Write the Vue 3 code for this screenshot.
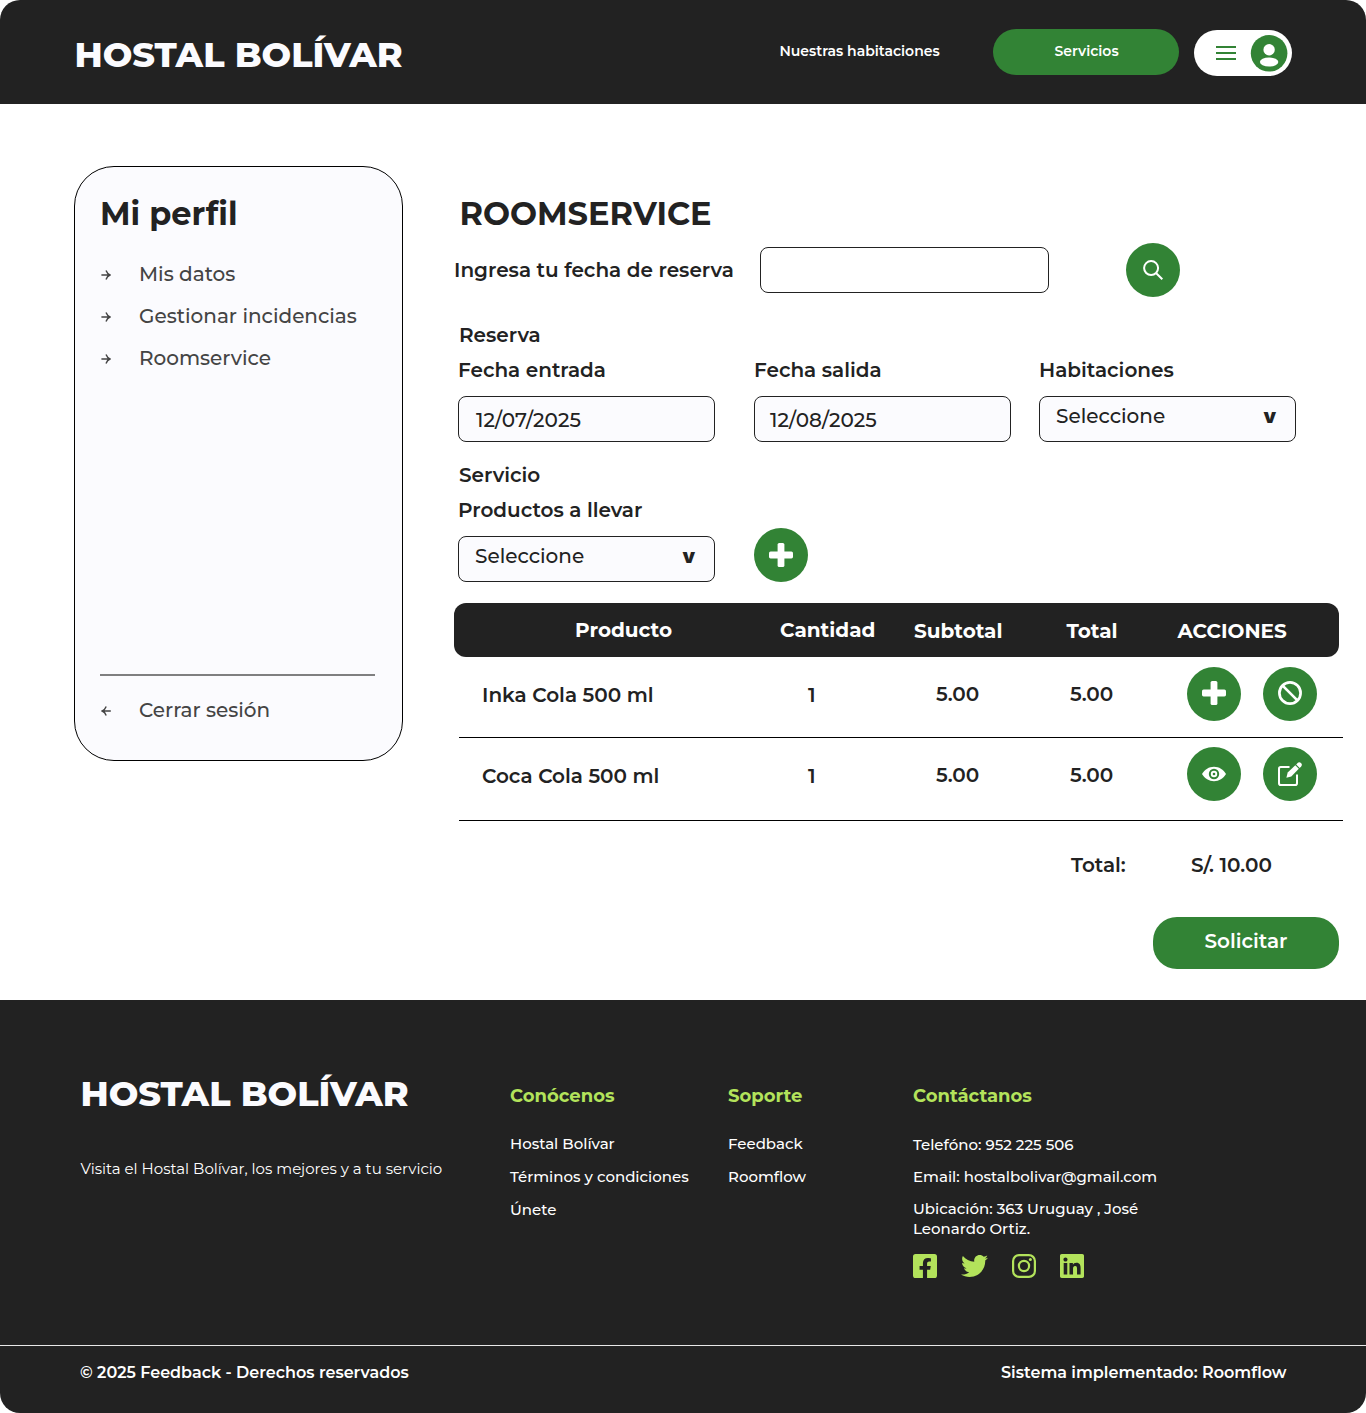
<script setup>
const menu = ['Mis datos', 'Gestionar incidencias', 'Roomservice']

const products = [
  { name: 'Inka Cola 500 ml', row: 'first', qty: 1, subtotal: '5.00', total: '5.00', actions: ['plus', 'ban'] },
  { name: 'Coca Cola 500 ml', row: 'last', qty: 1, subtotal: '5.00', total: '5.00', actions: ['eye', 'edit'] },
]
</script>

<template>
  <div class="page">
    <header class="topbar">
      <div class="logo">HOSTAL BOLÍVAR</div>
      <a class="nav-link">Nuestras habitaciones</a>
      <a class="nav-pill">Servicios</a>
      <div class="account">
        <svg class="burger" viewBox="0 0 20 14"><path d="M0 1h20M0 7h20M0 13h20" stroke="#328335" stroke-width="1.9" /></svg>
        <svg class="avatar" viewBox="-.6 0 38 37">
          <circle cx="18.5" cy="18.3" r="18.3" fill="#328335" />
          <circle cx="18.5" cy="14.8" r="5.7" fill="#fff" />
          <ellipse cx="18.5" cy="27" rx="9.2" ry="4.5" fill="#fff" />
        </svg>
      </div>
    </header>

    <main class="body">
      <aside class="profile">
        <h2>Mi perfil</h2>
        <nav>
          <a v-for="item in menu" :key="item" class="menu-item">
            <svg viewBox="0 0 10 10"><path d="M.4 5H8.6M5 .6Q6.2 3.8 9 5 6.2 6.2 5 9.4" /></svg>
            <span>{{ item }}</span>
          </a>
        </nav>
        <div class="logout">
          <a class="menu-item">
            <svg viewBox="0 0 10 10"><path d="M9.8 5H1.6M5.2 .6Q4 3.8 1.2 5 4 6.2 5.2 9.4" /></svg>
            <span>Cerrar sesión</span>
          </a>
        </div>
      </aside>

      <section class="content">
        <h1>ROOMSERVICE</h1>
        <div class="search">
          <label>Ingresa tu fecha de reserva</label>
          <input type="text" />
          <button class="round">
            <svg class="search-icon" viewBox="0 0 20 20"><circle cx="8.1" cy="8.1" r="7" /><path d="M13 13l6.3 6.3" /></svg>
          </button>
        </div>

        <div class="section-title reserva">Reserva</div>
        <div class="fields">
          <div class="field">
            <label>Fecha entrada</label>
            <div class="box check-in">12/07/2025</div>
          </div>
          <div class="field second">
            <label>Fecha salida</label>
            <div class="box check-out">12/08/2025</div>
          </div>
          <div class="field third">
            <label>Habitaciones</label>
            <div class="box select"><span>Seleccione</span><b>v</b></div>
          </div>
        </div>

        <div class="section-title servicio">Servicio</div>
        <div class="fields service-fields">
          <div class="field">
            <label>Productos a llevar</label>
            <div class="box select"><span>Seleccione</span><b>v</b></div>
          </div>
          <button class="round add">
            <svg class="icon" viewBox="0 0 24 24"><rect x="8.6" width="6.8" height="24" rx="1.6" /><rect y="8.6" width="24" height="6.8" rx="1.6" /></svg>
          </button>
        </div>

        <div class="thead">
          <span class="th-producto">Producto</span>
          <span class="th-cantidad">Cantidad</span>
          <span>Subtotal</span>
          <span>Total</span>
          <span>ACCIONES</span>
        </div>
        <div v-for="p in products" :key="p.name" class="row" :class="p.row">
          <span class="lower">{{ p.name }}</span>
          <span class="lower">{{ p.qty }}</span>
          <span class="price">{{ p.subtotal }}</span>
          <span class="price">{{ p.total }}</span>
          <div class="actions">
            <button v-for="a in p.actions" :key="a" class="round">
              <svg v-if="a === 'plus'" class="icon" viewBox="0 0 24 24"><rect x="8.6" width="6.8" height="24" rx="1.6" /><rect y="8.6" width="24" height="6.8" rx="1.6" /></svg>
              <svg v-else-if="a === 'ban'" class="icon" viewBox="0 0 24 24"><circle cx="12" cy="12" r="10.6" fill="none" stroke="#fff" stroke-width="2.7" /><path d="M4.6 4.6l14.8 14.8" stroke="#fff" stroke-width="2.7" /></svg>
              <svg v-else-if="a === 'eye'" class="icon" viewBox="0 0 24 24">
                <path d="M0 12C2.6 7.6 7 4.8 12 4.8S21.4 7.6 24 12c-2.6 4.4-7 7.2-12 7.2S2.6 16.4 0 12z" />
                <circle cx="12" cy="12" r="5.2" fill="#328335" />
                <circle cx="12" cy="12" r="3.2" fill="#fff" />
                <circle cx="12" cy="12" r="1.3" fill="#328335" />
              </svg>
              <svg v-else class="icon" viewBox="0 0 24 24">
                <path d="M11.5 5H2.8Q1 5 1 6.8v14.4Q1 23 2.8 23h14.4q1.8 0 1.8-1.8V12.5" fill="none" stroke="#fff" stroke-width="2" />
                <path d="M8.4 15.7l1.3-5.1 7.6-7.3 3.5 3.5-7.5 7.6z" />
                <path d="M18.2 2.4l1.4-1.5q1.6-1.5 3.4.1 1.7 1.8.2 3.4l-1.5 1.5z" />
              </svg>
            </button>
          </div>
        </div>

        <div class="sum">
          <span class="sum-label">Total:</span>
          <span>S/. 10.00</span>
        </div>
        <button class="submit">Solicitar</button>
      </section>
    </main>

    <footer class="footer">
      <div class="columns">
        <div class="brand">
          <div class="logo">HOSTAL BOLÍVAR</div>
          <p>Visita el Hostal Bolívar, los mejores y a tu servicio</p>
        </div>
        <div class="links">
          <h3>Conócenos</h3>
          <a>Hostal Bolívar</a>
          <a>Términos y condiciones</a>
          <a>Únete</a>
        </div>
        <div class="links">
          <h3>Soporte</h3>
          <a>Feedback</a>
          <a>Roomflow</a>
        </div>
        <div class="contact">
          <h3>Contáctanos</h3>
          <p>Telefóno: 952 225 506</p>
          <p>Email: hostalbolivar@gmail.com</p>
          <p>Ubicación: 363 Uruguay , José<br />Leonardo Ortiz.</p>
          <div class="social">
            <svg width="24" height="24" viewBox="0 32 448 448"><path d="M400 32H48A48 48 0 0 0 0 80v352a48 48 0 0 0 48 48h137.25V327.69h-63V256h63v-54.64c0-62.15 37-96.48 93.67-96.48 27.14 0 55.52 4.84 55.52 4.84v61h-31.27c-30.81 0-40.42 19.12-40.42 38.73V256h68.78l-11 71.69h-57.78V480H400a48 48 0 0 0 48-48V80a48 48 0 0 0-48-48z" /></svg>
            <svg width="27" height="22" viewBox="0 48 512 416"><path d="M459.37 151.716c.325 4.548.325 9.097.325 13.645 0 138.72-105.583 298.558-298.558 298.558-59.452 0-114.68-17.219-161.137-47.106 8.447.974 16.568 1.299 25.34 1.299 49.055 0 94.213-16.568 130.274-44.832-46.132-.975-84.792-31.188-98.112-72.772 6.498.974 12.995 1.624 19.818 1.624 9.421 0 18.843-1.3 27.614-3.573-48.081-9.747-84.143-51.98-84.143-102.985v-1.299c13.969 7.797 30.214 12.67 47.431 13.319-28.264-18.843-46.781-51.005-46.781-87.391 0-19.492 5.197-37.36 14.294-52.954 51.655 63.675 129.3 105.258 216.365 109.807-1.624-7.797-2.599-15.918-2.599-24.04 0-57.828 46.782-104.934 104.934-104.934 30.213 0 57.502 12.67 76.67 33.137 23.715-4.548 46.456-13.32 66.599-25.34-7.798 24.366-24.366 44.833-46.132 57.827 21.117-2.273 41.584-8.122 60.426-16.243-14.292 20.791-32.161 39.308-52.628 54.253z" /></svg>
            <svg width="24" height="24" viewBox="0 0 24 24"><rect x="1.1" y="1.1" width="21.8" height="21.8" rx="6" fill="none" stroke="#b3e35b" stroke-width="2.2" /><circle cx="12" cy="12" r="5.1" fill="none" stroke="#b3e35b" stroke-width="2.2" /><circle cx="18.4" cy="5.6" r="1.5" /></svg>
            <svg width="24" height="24" viewBox="0 32 448 448"><path d="M416 32H31.9C14.3 32 0 46.5 0 64.3v383.4C0 465.5 14.3 480 31.9 480H416c17.6 0 32-14.5 32-32.3V64.3c0-17.8-14.4-32.3-32-32.3zM135.4 416H69V202.2h66.5V416zm-33.2-243c-21.3 0-38.5-17.3-38.5-38.5S80.9 96 102.2 96c21.2 0 38.5 17.3 38.5 38.5 0 21.3-17.2 38.5-38.5 38.5zm282.1 243h-66.4V312c0-24.8-.5-56.7-34.5-56.7-34.6 0-39.9 27-39.9 54.9V416h-66.4V202.2h63.7v29.2h.9c8.9-16.8 30.6-34.5 62.9-34.5 67.2 0 79.7 44.3 79.7 101.9V416z" /></svg>
          </div>
        </div>
      </div>
      <div class="legal">
        <span class="copy">© 2025 Feedback - Derechos reservados</span>
        <span>Sistema implementado: Roomflow</span>
      </div>
    </footer>
  </div>
</template>

<style>
body {
  margin: 0;
  background: #fff;
}
</style>

<style scoped>
.page {
  width: 1366px;
  height: 1413px;
  display: flex;
  flex-direction: column;
  overflow: hidden;
  color: #222;
  font-family: Montserrat, Inter, sans-serif;
  font-size: 20px;
  line-height: 24px;
  white-space: nowrap;
}
.page * { box-sizing: border-box; }
h1, h2, h3, p { margin: 0; }
button { border: 0; padding: 0; font: inherit; }

/* header */
.topbar {
  height: 104px;
  display: flex;
  align-items: flex-start;
  background: #222;
  border-radius: 20px 20px 0 0;
  padding-left: 74.5px;
  color: #fff;
}
.logo {
  font-size: 35px;
  line-height: 40px;
  font-weight: 800;
  color: #fbfbfe;
}
.topbar .logo { width: 705px; margin-top: 35px; }
.nav-link, .nav-pill { font-size: 14px; font-weight: 600; }
.nav-link { width: 213.5px; margin-top: 39px; }
.nav-pill {
  width: 186px;
  height: 46px;
  margin-top: 29px;
  line-height: 44px;
  padding-left: 61.5px;
  border-radius: 23px;
  background: #328335;
}
.account {
  width: 98px;
  height: 46px;
  margin: 30px 0 0 15px;
  padding-left: 22px;
  display: flex;
  align-items: center;
  border-radius: 23px;
  background: #fff;
}
.burger { width: 20px; height: 14px; }
.avatar { width: 38px; height: 37px; margin-left: 14px; }

/* body */
.body {
  height: 896px;
  display: flex;
  align-items: flex-start;
  padding-left: 74px;
}
.profile {
  width: 329px;
  height: 595px;
  margin-top: 62px;
  padding: 27px 27px 0 25px;
  display: flex;
  flex-direction: column;
  border: 1px solid #000;
  border-radius: 40px;
  background: #fbfbfe;
}
.profile h2 {
  font-size: 32px;
  line-height: 40px;
}
.profile nav { margin-top: 19px; }
.menu-item {
  display: flex;
  align-items: center;
  height: 42px;
  padding-left: 1px;
  font-weight: 500;
  color: #444;
}
.menu-item svg {
  width: 10px;
  height: 10px;
  margin: 2px 28px 0 0;
  fill: none;
  stroke: #444;
  stroke-width: 1.4;
}
.logout {
  margin-top: 295px;
  padding-top: 13px;
  border-top: 2px solid #7f7f80;
}

.content {
  width: 889px;
  margin: 90px 0 0 51px;
  display: flex;
  flex-direction: column;
}
h1 {
  font-size: 32px;
  line-height: 40px;
  margin-left: 5.5px;
}
label, .section-title { font-weight: 600; }
.search {
  display: flex;
  align-items: center;
  height: 54px;
  margin-top: 9px;
}
.search label { width: 306px; }
.search input {
  width: 289px;
  height: 46px;
  margin: 0 77px 0 0;
  border: 1px solid #222;
  border-radius: 8px;
  background: #fff;
}
.round {
  width: 54px;
  height: 54px;
  display: flex;
  align-items: center;
  justify-content: center;
  border-radius: 50%;
  background: #328335;
}
.icon { width: 24px; height: 24px; fill: #fff; }
.search-icon {
  width: 20px;
  height: 20px;
  fill: none;
  stroke: #fff;
  stroke-width: 2;
}
.section-title { margin-left: 5px; }
.reserva { margin-top: 26px; line-height: 25px; }
.servicio { margin-top: 21px; }
.fields { display: flex; margin: 10px 0 0 4px; }
.service-fields { align-items: flex-end; margin-top: 11px; }
.field { width: 257px; }
.field label { display: block; }
.second { margin-left: 39px; }
.third { margin-left: 28px; }
.add { margin-left: 39px; }
.box {
  height: 46px;
  margin-top: 14px;
  line-height: 46px;
  font-weight: 500;
  border: 1px solid #222;
  border-radius: 8px;
  background: #fbfbfe;
}
.check-in { padding-left: 17px; }
.check-out { padding-left: 15px; }
.select {
  display: flex;
  line-height: 38px;
  padding-left: 16px;
}
.select span { width: 207.5px; }
.select b { font-family: Inter, sans-serif; font-weight: 900; }

/* products table */
.thead {
  width: 885px;
  height: 54px;
  margin-top: 21px;
  display: grid;
  grid-template-columns: 326px 134px 152.5px 111px 1fr;
  line-height: 56px;
  font-weight: 700;
  color: #fff;
  background: #222;
  border-radius: 12px;
}
.th-producto { padding-left: 121px; line-height: 54px; }
.th-cantidad { line-height: 54px; }
.row {
  display: grid;
  grid-template-columns: 326px 128px 134px 117px 1fr;
  margin-left: 5px;
  padding-left: 23px;
  line-height: 54px;
  font-weight: 600;
  border-bottom: 1px solid #000;
}
.first { height: 81px; padding-top: 10px; }
.last { height: 83px; padding-top: 9px; }
.lower { padding-top: 1px; }
.last .lower { padding-top: 2px; }
.last .price { padding-top: 1px; }
.actions { display: flex; gap: 22px; }
.first .round { padding-bottom: 2px; }
.sum {
  display: flex;
  margin: 32px 0 0 617px;
  font-weight: 600;
}
.sum-label { width: 120px; }
.submit {
  width: 186px;
  height: 52px;
  margin: 40px 0 0 699px;
  padding: 0 0 4px 51.5px;
  text-align: left;
  font-weight: 600;
  color: #fff;
  border-radius: 24px;
  background: #328335;
}

/* footer */
.footer {
  height: 413px;
  background: #222;
  border-radius: 0 0 20px 20px;
  color: #fff;
  font-size: 15px;
}
.columns {
  display: grid;
  grid-template-columns: 429.5px 218px 185px 1fr;
  height: 345px;
  padding: 74px 0 0 80.5px;
}
.brand p { margin-top: 43px; }
.links, .contact {
  display: flex;
  flex-direction: column;
  padding-top: 10px;
  font-weight: 500;
}
h3 {
  font-size: 18px;
  line-height: 24px;
  color: #b3e35b;
}
.links h3 { margin-bottom: 19px; }
.links a { line-height: 33px; }
.contact p { line-height: 20px; margin-bottom: 12px; }
.contact h3 { margin-bottom: 27px; }
.social {
  display: flex;
  align-items: center;
  gap: 24px;
  height: 24px;
  margin-top: 3px;
  fill: #b3e35b;
}
.legal {
  display: flex;
  padding: 15px 0 0 80px;
  border-top: 1px solid #e8e8e8;
  font-size: 16px;
  font-weight: 600;
}
.copy { width: 921px; }
</style>
